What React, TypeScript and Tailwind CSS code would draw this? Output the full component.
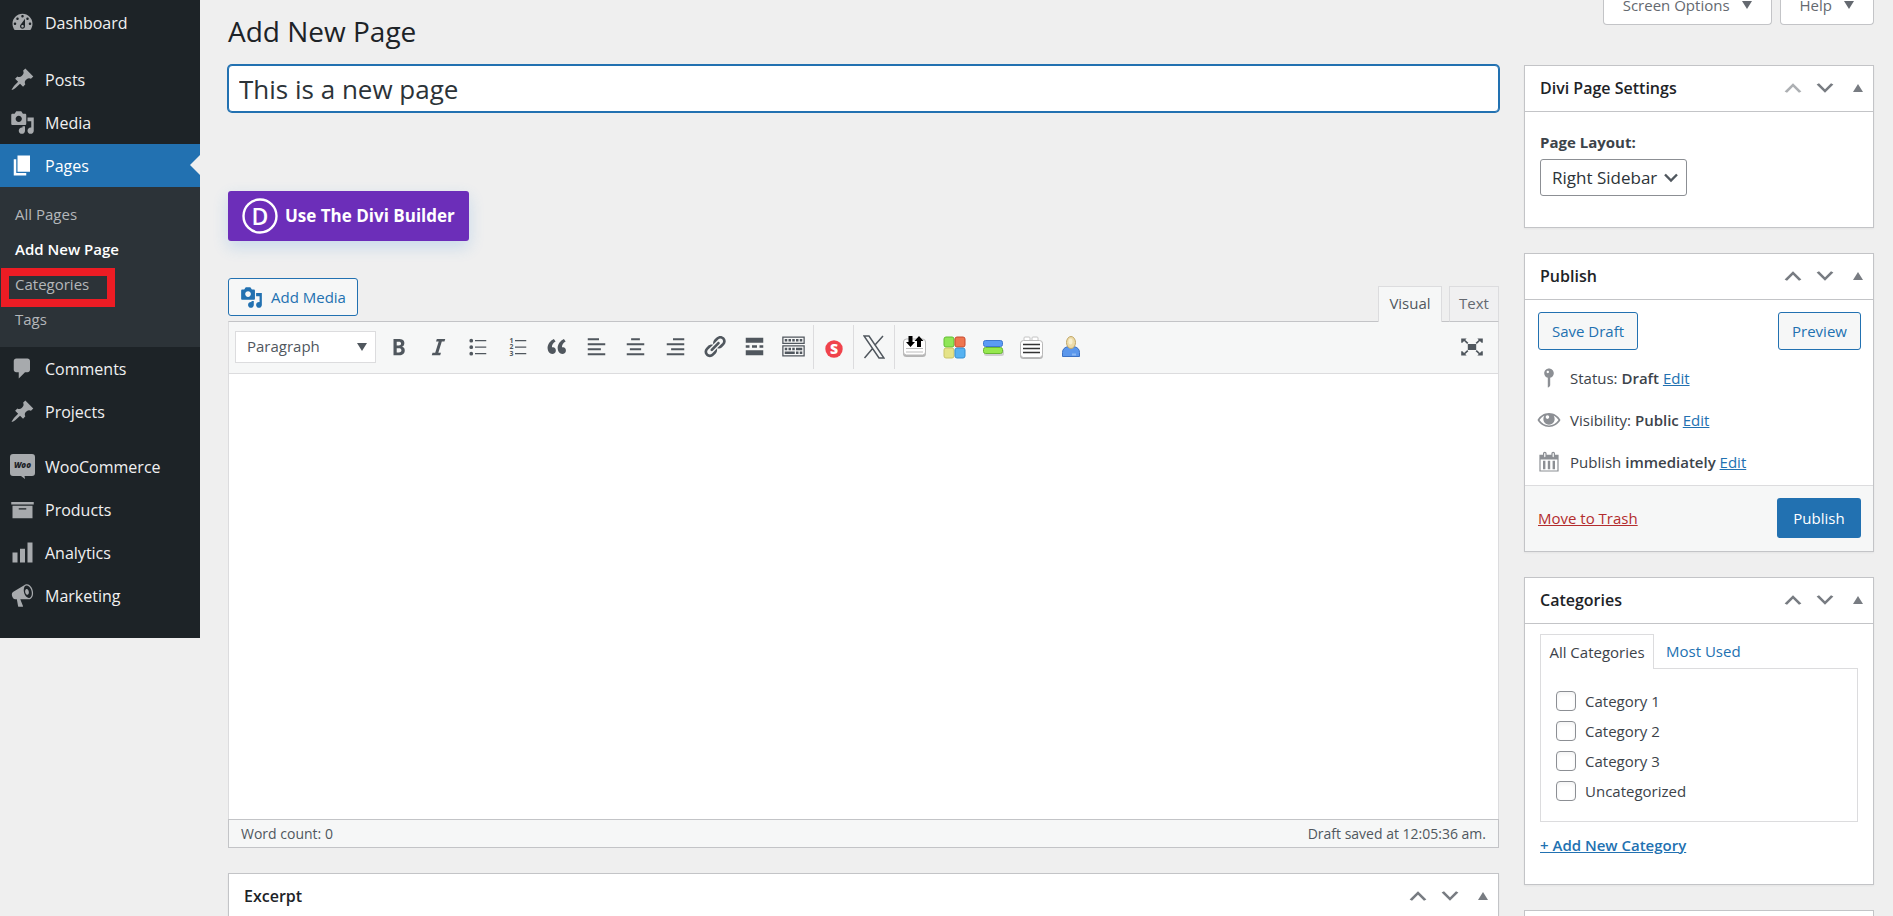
import React from "react";

const icons = {
    dashboard: "M3.76 16h12.48c1.1-1.37 1.76-3.11 1.76-5 0-4.42-3.58-8-8-8s-8 3.58-8 8c0 1.89.66 3.63 1.76 5zM10 4c.55 0 1 .45 1 1s-.45 1-1 1-1-.45-1-1 .45-1 1-1zM6 6c.55 0 1 .45 1 1s-.45 1-1 1-1-.45-1-1 .45-1 1-1zm8 0c.55 0 1 .45 1 1s-.45 1-1 1-1-.45-1-1 .45-1 1-1zm-5.37 5.55L12 7v6c0 1.1-.9 2-2 2s-2-.9-2-2c0-.57.24-1.08.63-1.45zM4 10c.55 0 1 .45 1 1s-.45 1-1 1-1-.45-1-1 .45-1 1-1zm12 0c.55 0 1 .45 1 1s-.45 1-1 1-1-.45-1-1 .45-1 1-1zm-5 3c0-.55-.45-1-1-1s-1 .45-1 1 .45 1 1 1 1-.45 1-1z",
    post: "M10.44 3.02l1.82-1.82 6.36 6.35-1.83 1.82c-1.05-.68-2.48-.57-3.41.36l-.75.75c-.92.93-1.04 2.35-.35 3.41l-1.83 1.82-2.41-2.41-2.8 2.79c-.42.42-3.38 2.71-3.8 2.29s1.86-3.39 2.28-3.81l2.79-2.79L4.1 9.36l1.83-1.82c1.05.69 2.48.57 3.4-.36l.75-.75c.93-.92 1.05-2.35.36-3.41z",
    media: "M13 11V4c0-.55-.45-1-1-1h-1.67L9 1H5L3.67 3H2c-.55 0-1 .45-1 1v7c0 .55.45 1 1 1h10c.55 0 1-.45 1-1zM7 4.5c1.38 0 2.5 1.12 2.5 2.5S8.38 9.5 7 9.5 4.5 8.38 4.5 7 5.62 4.5 7 4.5zM14 6h5v10.5c0 1.38-1.12 2.5-2.5 2.5S14 17.88 14 16.5s1.12-2.5 2.5-2.5c.17 0 .34.02.5.05V9h-3V6zm-4 8.05V13h2v3.5c0 1.38-1.12 2.5-2.5 2.5S7 17.88 7 16.5 8.12 14 9.5 14c.17 0 .34.02.5.05z",
    page: "M6 15V2h10v13H6zm-1 1h8v2H3V5h2v11z",
    comments: "M5 2h9c1.1 0 2 .9 2 2v7c0 1.1-.9 2-2 2h-2l-5 5v-5H5c-1.1 0-2-.9-2-2V4c0-1.1.9-2 2-2z",
    archive: "M19 4v2H1V4h18zM2 7h16v10H2V7zm11 3V9H7v1h6z",
    chart: "M18 18V2h-4v16h4zm-6 0V7H8v11h4zm-6 0v-8H2v8h4z",
    megaphone: "M18.15 5.94c.46 1.62.38 3.22-.02 4.48-.42 1.28-1.26 2.18-2.3 2.48-.16.06-.26.06-.4.06-.06.02-.12.02-.18.02-.06.02-.14.02-.22.02h-6.8l2.22 5.5c.02.14-.06.26-.14.34-.08.1-.24.16-.34.16H6.95c-.1 0-.26-.06-.34-.16-.08-.08-.16-.2-.14-.34l-1-5.5H4.25l-.02-.02c-.5.06-1.08-.18-1.54-.62s-.88-1.08-1.06-1.88c-.24-.8-.2-1.56-.02-2.2.18-.62.58-1.08 1.06-1.3l.02-.02 9-5.4c.1-.06.18-.1.24-.16.06-.04.14-.08.24-.12.16-.08.28-.12.5-.18 1.04-.3 2.24.1 3.22.98s1.84 2.24 2.26 3.86zm-2.58 5.98h-.02c.4-.1.74-.34 1.04-.7.58-.7.86-1.76.86-3.04 0-.64-.1-1.3-.28-1.98-.34-1.36-1.02-2.5-1.78-3.24s-1.68-1.1-2.46-.88c-.82.22-1.4.96-1.7 2-.32 1.04-.28 2.36.06 3.72.38 1.36 1 2.5 1.8 3.24.78.74 1.62 1.1 2.48.88zm-2.54-7.08c.22-.04.42-.02.62.04.38.16.76.48 1.02 1s.42 1.2.42 1.78c0 .3-.04.56-.12.8-.18.48-.44.84-.86.94-.34.1-.8-.06-1.14-.4s-.64-.86-.78-1.5c-.18-.62-.12-1.24.02-1.72s.48-.84.82-.94z",
    bold: "M6 4v13h4.54c1.37 0 2.46-.33 3.26-1 .8-.66 1.2-1.58 1.2-2.77 0-.84-.17-1.51-.51-2.01s-.9-.85-1.67-1.03v-.09c.57-.1 1.02-.4 1.36-.9s.51-1.13.51-1.91c0-1.14-.39-1.98-1.17-2.5C12.75 4.26 11.5 4 9.78 4H6zm2.57 5.15V6.26h1.36c.73 0 1.27.11 1.61.32.34.22.51.58.51 1.07 0 .54-.16.92-.47 1.15s-.82.35-1.51.35h-1.5zm0 2.19h1.6c1.44 0 2.16.53 2.16 1.61 0 .6-.17 1.05-.51 1.34s-.86.43-1.57.43H8.57v-3.38z",
    italic: "M14.78 6h-2.13l-2.8 9h2.12l-.62 2H4.6l.62-2h2.14l2.8-9H8.03l.62-2h6.75z",
    bullets: "M3.5 5.3a1.5 1.5 0 1 1 3 0 1.5 1.5 0 0 1-3 0zm0 5.2a1.5 1.5 0 1 1 3 0 1.5 1.5 0 0 1-3 0zm0 5.2a1.5 1.5 0 1 1 3 0 1.5 1.5 0 0 1-3 0zM8 4.8h9v1H8zm0 5.2h9v1H8zm0 5.2h9v1H8z",
    quote: "M9.49 13.22c0-.74-.2-1.38-.61-1.9-.62-.78-1.83-.88-2.53-.72-.29-1.65 1.11-3.75 2.92-4.65L7.88 4c-2.73 1.3-5.42 4.28-4.96 8.05C3.21 14.43 4.59 16 6.54 16c.85 0 1.56-.25 2.12-.75s.83-1.18.83-2.03zm8.05 0c0-.74-.2-1.38-.61-1.9-.63-.78-1.83-.88-2.53-.72-.29-1.65 1.11-3.75 2.92-4.65L15.93 4c-2.73 1.3-5.41 4.28-4.95 8.05.29 2.38 1.66 3.95 3.61 3.95.85 0 1.56-.25 2.12-.75s.83-1.18.83-2.03z",
    left: "M3 3.4h9V5H3zm0 4h14V9H3zm0 4h10.5V13H3zm0 4h14V17H3z",
    center: "M6.5 3.4h7V5h-7zM3 7.4h14V9H3zm2.5 4h9V13h-9zM3 15.4h14V17H3z",
    right: "M8 3.4h9V5H8zm-5 4h14V9H3zm3.500 4H17V13H6.500zM3 15.4h14V17H3z",
    link: "M17.74 2.76c1.68 1.69 1.68 4.41 0 6.1l-1.53 1.52c-1.12 1.12-2.7 1.47-4.14 1.09l2.62-2.61.76-.77.76-.76c.84-.84.84-2.2 0-3.04-.84-.85-2.2-.85-3.04 0l-.77.76-3.38 3.38c-.37-1.44-.02-3.02 1.1-4.14l1.52-1.53c1.69-1.68 4.42-1.68 6.1 0zM8.59 13.43l5.34-5.34c.42-.42.42-1.1 0-1.52-.44-.43-1.13-.39-1.53 0l-5.33 5.34c-.42.42-.42 1.1 0 1.52.44.43 1.13.39 1.52 0zm-.76 2.29l4.14-4.15c.38 1.44.03 3.02-1.09 4.14l-1.52 1.53c-1.69 1.68-4.41 1.68-6.1 0-1.68-1.68-1.68-4.42 0-6.1l1.53-1.52c1.12-1.12 2.7-1.47 4.14-1.1l-4.14 4.15c-.85.84-.85 2.2 0 3.05.84.84 2.2.84 3.04 0z",
    more: "M17 7V3H3v4h14zM6 11V9H3v2h3zm6 0V9H8v2h4zm5 0V9h-3v2h3zm0 6v-4H3v4h14z",
    sink: "M19 2v6H1V2h18zm-1 5V3H2v4h16zM5 4v2H3V4h2zm3 0v2H6V4h2zm3 0v2H9V4h2zm3 0v2h-2V4h2zm3 0v2h-2V4h2zm2 5v9H1V9h18zm-1 8v-7H2v7h16zM5 11v2H3v-2h2zm3 0v2H6v-2h2zm3 0v2H9v-2h2zm6 0v2h-5v-2h5zm-6 3v2H3v-2h8zm3 0v2h-2v-2h2zm3 0v2h-2v-2h2z",
    fullscreen: "M6.500 7.500h7v5h-7zM1 3h4.500L4.400 4.100 7 6.500l-1 1-2.600-2.400L2 6.500H1zm18 0h-4.500l1.100 1.100L13 6.500l1 1 2.600-2.400L18 6.500h1zM1 17h4.500l-1.100-1.100L7 13.500l-1-1-2.600 2.400L2 13.500H1zm18 0h-4.500l1.100-1.100-2.600-2.400 1-1 2.600 2.400 1.400-1.400h1z",
    up: "M15 14l-5-5-5 5-2-1 7-7 7 7z",
    down: "M5 6l5 5 5-5 2 1-7 7-7-7z",
    status: "M14 6c0 1.860-1.280 3.410-3 3.860V16c0 1-2 2-2 2V9.860C7.280 9.410 6 7.860 6 6c0-2.210 1.790-4 4-4s4 1.790 4 4zM8 5c0 .55.45 1 1 1s1-.45 1-1-.45-1-1-1-1 .45-1 1z",
    eye: "M10 4.200C5.900 4.200 2.300 6.500.4 10c1.900 3.500 5.500 5.800 9.600 5.800s7.700-2.300 9.600-5.800C17.700 6.500 14.100 4.200 10 4.200zm0 10.300c-3.200 0-6-1.700-7.900-4.500 1-1.500 2.400-2.700 4-3.500-.5.800-.8 1.700-.8 2.700 0 2.600 2.100 4.700 4.700 4.700s4.700-2.100 4.700-4.700c0-1-.3-1.900-.8-2.700 1.600.8 3 2 4 3.500-1.900 2.800-4.700 4.500-7.900 4.500zM8.700 6.100a1.500 1.500 0 1 1 0 3 1.500 1.500 0 0 1 0-3z",
    calendar: "M15 4h3v14H2V4h3V3c0-.83.67-1.5 1.5-1.5S8 2.17 8 3v1h4V3c0-.83.67-1.5 1.5-1.5S15 2.17 15 3v1zM6 3v2.5c0 .28.22.5.5.5s.5-.22.5-.5V3c0-.28-.22-.5-.5-.5S6 2.72 6 3zm7 0v2.5c0 .28.22.5.5.5s.5-.22.5-.5V3c0-.28-.22-.5-.5-.5s-.5.22-.5.5zm4 14V8H3v9h14zM7 16V9H5v7h2zm4 0V9H9v7h2zm4 0V9h-2v7h2z",
};

type IconName = keyof typeof icons;

function Icon({name, className = "size-6"}: { name: IconName; className?: string }) {
    return (
        <svg viewBox="0 0 20 20" fill="currentColor" fillRule="evenodd" aria-hidden="true" className={`shrink-0 ${className}`}>
            <path d={icons[name]}/>
        </svg>
    );
}

function WooIcon() {
    return (
        <svg viewBox="0 0 25 25" aria-hidden="true" className="size-[25px] shrink-0">
            <path fill="#a7aaad" d="M3 0h19a3 3 0 0 1 3 3v16a3 3 0 0 1-3 3h-7.500l.5 3-4-3H3a3 3 0 0 1-3-3V3a3 3 0 0 1 3-3z"/>
            <text x="12.500" y="14" textAnchor="middle" fontSize="8" fontStyle="italic" fontWeight="800" fill="#1d2327">Woo</text>
        </svg>
    );
}

const submenu = ["All Pages", "Add New Page", "Categories", "Tags"];

function MenuItem({icon, label, active}: { icon: IconName | "woo"; label: string; active?: boolean }) {
    return (
        <a href="#" className={`relative flex h-[43px] items-center gap-[10px] pl-[10px] text-base ${active ? "bg-[#2271b1] text-white" : "text-[#f0f0f1]"}`}>
            <span className={`flex w-[25px] justify-center ${active ? "text-white" : "text-[#a7aaad]"}`}>
                {icon === "woo" ? <WooIcon/> : <Icon name={icon} className="size-[25px]"/>}
            </span>
            {label}
            {active && (
                <span className="absolute right-0 top-[11px] border-y-[10px] border-r-[10px] border-y-transparent border-r-[#efefef]"/>
            )}
        </a>
    );
}

function Sidebar() {
    return (
        <nav className="w-[200px] shrink-0 self-start bg-[#1d2327] pb-[21px] pt-px">
            <MenuItem icon="dashboard" label="Dashboard"/>
            <div className="pt-[14px]">
                <MenuItem icon="post" label="Posts"/>
                <MenuItem icon="media" label="Media"/>
                <MenuItem icon="page" label="Pages" active/>
            </div>
            <ul className="bg-[#2c3338] py-[10px]">
                {submenu.map((item) => (
                    <li key={item} className="relative">
                        <a
                            href="#"
                            className={`flex h-[35px] items-center pl-[15px] text-[15px] ${item === "Add New Page" ? "font-semibold text-white" : "text-[#b4b7ba]"}`}
                        >
                            {item}
                        </a>
                        {item === "Categories" && (
                            <span className="pointer-events-none absolute left-px top-px h-[39px] w-[114px] border-8 border-[#ed1c24]"/>
                        )}
                    </li>
                ))}
            </ul>
            <MenuItem icon="comments" label="Comments"/>
            <MenuItem icon="post" label="Projects"/>
            <div className="pt-3">
                <MenuItem icon="woo" label="WooCommerce"/>
                <MenuItem icon="archive" label="Products"/>
                <MenuItem icon="chart" label="Analytics"/>
                <MenuItem icon="megaphone" label="Marketing"/>
            </div>
        </nav>
    );
}

function Triangle({className}: { className: string }) {
    return (
        <svg viewBox="0 0 10 8" fill="currentColor" aria-hidden="true" className={`w-[10px] shrink-0 ${className}`}>
            <path d="M5 0l5 8H0z"/>
        </svg>
    );
}

function ScreenTab({label}: { label: string }) {
    return (
        <button className="-mt-[15px] flex h-10 items-center gap-3 rounded-b border border-t-0 border-[#c3c4c7] bg-white px-[19px] pt-px text-[15px] text-[#646970]">
            {label}
            <Triangle className="rotate-180"/>
        </button>
    );
}

function Panel({title, children, first}: { title: string; children?: React.ReactNode; first?: boolean }) {
    return (
        <section className="border border-[#c3c4c7] bg-white shadow-xs">
            <div className="flex h-[46px] items-center justify-between border-b border-[#c3c4c7] pb-px pl-[15px] pr-[10px]">
                <h2 className="text-base font-semibold text-[#1d2327]">{title}</h2>
                <div className="flex items-center text-[#787c82]">
                    <button aria-label="Move up" className={`flex w-8 justify-center ${first ? "opacity-60" : ""}`}>
                        <Icon name="up"/>
                    </button>
                    <button aria-label="Move down" className="flex w-8 justify-center">
                        <Icon name="down"/>
                    </button>
                    <button aria-label="Toggle panel" className="ml-3 flex justify-center">
                        <Triangle className=""/>
                    </button>
                </div>
            </div>
            {children}
        </section>
    );
}

const formatButtons: IconName[] = ["bold", "italic", "bullets"];
const blockButtons: IconName[] = ["quote", "left", "center", "right", "link", "more", "sink"];

function ToolButton({name}: { name: IconName }) {
    return (
        <button aria-label={name} className="flex w-[35px] justify-center">
            <Icon name={name} className="size-[25px]"/>
        </button>
    );
}

function OrderedListIcon() {
    return (
        <svg viewBox="0 0 20 20" fill="currentColor" aria-hidden="true" className="size-[25px]">
            <path d="M8 4.800h9v1H8zm0 5.200h9v1H8zm0 5.200h9v1H8z"/>
            <text x="3.500" y="7" fontSize="5.500" fontWeight="700">1</text>
            <text x="3.500" y="12.200" fontSize="5.500" fontWeight="700">2</text>
            <text x="3.500" y="17.400" fontSize="5.500" fontWeight="700">3</text>
        </svg>
    );
}

function XIcon() {
    return (
        <svg viewBox="0 0 22 24" fill="none" stroke="currentColor" strokeWidth="1.500" aria-hidden="true" className="h-6 w-[22px]">
            <path d="M1 1h5l15 22h-5zM20 1l-8.500 9.500M1.500 23l8.500-10"/>
        </svg>
    );
}

function SwapIcon() {
    return (
        <svg viewBox="0 0 25 24" aria-hidden="true" className="w-[25px]">
            <rect x="1" y="5" width="23" height="17" rx="3.500" fill="#b5b5b5"/>
            <rect x="1.500" y="4" width="22" height="16" rx="3" fill="#fff" stroke="#b9b9b9"/>
            <path d="M4 13.500h17M4 17h17" stroke="#bdbdbd"/>
            <path d="M6.500 1h4v6H13l-4.500 5L4 7h2.500zM15 12h4V6h2.500L17 1l-4.500 5H15z" fill="#000"/>
        </svg>
    );
}

function BlocksIcon() {
    return (
        <svg viewBox="0 0 24 24" aria-hidden="true" className="w-6">
            <rect x="2" y="2" width="10" height="10" rx="2" fill="#8fe657" stroke="#63bd33"/>
            <rect x="13" y="2" width="10" height="10" rx="2" fill="#ee7650" stroke="#c94b2e"/>
            <rect x="2" y="13" width="10" height="10" rx="2" fill="#e5e388" stroke="#c9c569"/>
            <rect x="13" y="13" width="10" height="10" rx="2" fill="#56b2f1" stroke="#3590d2"/>
        </svg>
    );
}

function BarsIcon() {
    return (
        <svg viewBox="0 0 24 24" aria-hidden="true" className="w-6">
            <rect x="3" y="14" width="20" height="7" rx="2.500" fill="#aaa" opacity=".5"/>
            <rect x="2.500" y="5.500" width="19" height="6" rx="2" fill="#5a9bf5" stroke="#3f78cf"/>
            <rect x="2.500" y="12.500" width="19" height="6" rx="2" fill="#96e84e" stroke="#69b733"/>
        </svg>
    );
}

function NoteIcon() {
    return (
        <svg viewBox="0 0 25 24" aria-hidden="true" className="w-[25px]">
            <rect x="1" y="6" width="23" height="18" rx="3.500" fill="#b5b5b5"/>
            <path d="M5 5V3q0-1 1-1h4q1 0 1 1v2m2 0V3q0-1 1-1h4q1 0 1 1v2" fill="#fff" stroke="#c4c4c4"/>
            <rect x="1.500" y="5.500" width="22" height="17" rx="3" fill="#fff" stroke="#b9b9b9"/>
            <path d="M4 9.500h17M4 13.500h17M4 17.500h17" stroke="#333" strokeWidth="1.300"/>
        </svg>
    );
}

function PersonIcon() {
    return (
        <svg viewBox="0 0 24 24" aria-hidden="true" className="w-6">
            <path d="M3.500 21.500v-4q0-5 6-6h5q6 1 6 6v4z" fill="#5b97ec" stroke="#3b71c4"/>
            <path d="M13 18.500h4v2h-4z" fill="#8bb8f5"/>
            <ellipse cx="12" cy="7.500" rx="4.500" ry="6" fill="#ecdba9" stroke="#c2a868"/>
            <ellipse cx="11.500" cy="6.500" rx="2" ry="3" fill="#f8efcf"/>
        </svg>
    );
}

function Toolbar() {
    return (
        <div className="flex h-[52px] items-center border-b border-[#dcdcde] bg-[#f6f7f7] pb-[2px] pl-[6px] pr-[10px] text-[#50575e]">
            <button className="flex h-8 w-[141px] items-center justify-between border border-[#dcdcde] bg-white pl-[11px] pr-2 text-[15px]">
                Paragraph
                <Triangle className="rotate-180"/>
            </button>
            <div className="ml-[5px] flex w-[430px] justify-between">
                {formatButtons.map((name) => <ToolButton key={name} name={name}/>)}
                <button aria-label="Numbered list" className="flex w-[35px] justify-center"><OrderedListIcon/></button>
                {blockButtons.map((name) => <ToolButton key={name} name={name}/>)}
            </div>
            <div className="ml-[2px] flex h-11 items-center">
                <button aria-label="Shortcodes" className="flex h-full w-10 items-center justify-center border-l border-[#dcdcde] pt-1">
                    <svg viewBox="0 0 18 18" className="size-[18px]">
                        <circle cx="9" cy="9" r="8.700" fill="#f0434c"/>
                        <text x="9" y="14" textAnchor="middle" fontSize="14" fontWeight="800" fill="#fff">S</text>
                    </svg>
                </button>
                <button aria-label="X" className="flex h-full w-[42px] items-center justify-center border-x border-[#dcdcde]"><XIcon/></button>
            </div>
            <div className="flex items-center">
                <button aria-label="Swap" className="flex w-[39px] justify-center"><SwapIcon/></button>
                <button aria-label="Blocks" className="flex w-[39px] justify-center"><BlocksIcon/></button>
                <button aria-label="Buttons" className="flex w-[39px] justify-center"><BarsIcon/></button>
                <button aria-label="Notes" className="flex w-[39px] justify-center"><NoteIcon/></button>
                <button aria-label="Author" className="flex w-[39px] justify-center"><PersonIcon/></button>
            </div>
            <button aria-label="Fullscreen" className="ml-auto flex w-8 justify-center"><Icon name="fullscreen"/></button>
        </div>
    );
}

function Editor() {
    return (
        <div>
            <div className="flex items-end justify-between">
                <button className="mb-[5px] flex h-[38px] items-center gap-2 rounded-[3px] border border-[#2271b1] bg-[#f6f7f7] px-[11px] text-[15px] text-[#2271b1]">
                    <Icon name="media" className="size-[23px]"/>
                    Add Media
                </button>
                <div className="-mb-px flex gap-[7px] text-[15px]">
                    <button className="h-[36px] w-16 border border-b-0 border-[#dcdcde] bg-[#f6f7f7] pb-[2px] text-[#50575e]">Visual</button>
                    <button className="h-[36px] w-[50px] border border-b-[#c3c4c7] border-[#dcdcde] bg-[#f0f0f1] pb-px text-[#646970]">Text</button>
                </div>
            </div>
            <div className="border border-[#dcdcde] border-t-[#c3c4c7] bg-white">
                <Toolbar/>
                <textarea aria-label="Page content" className="block h-[445px] w-full resize-none p-3 outline-none"/>
            </div>
            <div className="-mt-px flex h-[29px] items-center justify-between border border-[#c3c4c7] bg-[#f6f7f7] px-3 text-sm text-[#50575e]">
                <span>Word count: 0</span>
                <span>Draft saved at 12:05:36 am.</span>
            </div>
        </div>
    );
}

const publishRows: { icon: IconName; label: string; value: string }[] = [
    {icon: "status", label: "Status:", value: "Draft"},
    {icon: "eye", label: "Visibility:", value: "Public"},
    {icon: "calendar", label: "Publish", value: "immediately"},
];

const categories = ["Category 1", "Category 2", "Category 3", "Uncategorized"];

function SidePanels() {
    return (
        <aside className="flex w-[350px] shrink-0 flex-col gap-[25px] text-[15px] text-[#3c434a]">
            <Panel title="Divi Page Settings" first>
                <div className="px-[15px] pb-[31px] pt-[19px]">
                    <label htmlFor="layout" className="block leading-[22px] font-bold">Page Layout:</label>
                    <div className="relative mt-[6px] w-[147px]">
                        <select id="layout" className="h-[37px] w-full appearance-none rounded-[3px] border border-[#8c8f94] bg-white pl-[11px] text-[17px] text-[#2c3338]">
                            <option>Right Sidebar</option>
                        </select>
                        <svg viewBox="0 0 14 10" fill="none" stroke="#50575e" strokeWidth="2.400" className="pointer-events-none absolute right-[9px] top-[14px] w-[14px]">
                            <path d="M1 1.500l6 6 6-6"/>
                        </svg>
                    </div>
                </div>
            </Panel>
            <Panel title="Publish">
                <div className="flex justify-between pl-[13px] pr-3 pt-3">
                    <button className="h-[38px] w-[100px] rounded-[3px] border border-[#2271b1] bg-[#f6f7f7] text-[#2271b1]">Save Draft</button>
                    <button className="h-[38px] w-[83px] rounded-[3px] border border-[#2271b1] bg-[#f6f7f7] text-[#2271b1]">Preview</button>
                </div>
                <div className="pb-[2px] pl-3 pt-[7px]">
                    {publishRows.map((row) => (
                        <div key={row.label} className="flex h-[42px] items-center">
                            <Icon name={row.icon} className="mr-[9px] size-6 text-[#8c8f94]"/>
                            <span>
                                {row.label} <span className="font-semibold">{row.value}</span>{" "}
                                <a href="#" className="text-[#2271b1] underline">Edit</a>
                            </span>
                        </div>
                    ))}
                </div>
                <div className="flex items-center justify-between border-t border-[#dcdcde] bg-[#f6f7f7] pb-[13px] pl-[13px] pr-3 pt-3">
                    <a href="#" className="text-[#b32d2e] underline">Move to Trash</a>
                    <button className="h-10 w-[84px] rounded-[3px] bg-[#2271b1] text-white">Publish</button>
                </div>
            </Panel>
            <Panel title="Categories">
                <div className="px-[15px] pb-[27px] pt-[10px]">
                    <div className="flex">
                        <button className="-mb-px h-[35px] w-[114px] border border-b-0 border-[#dcdcde] bg-white text-[#3c434a]">All Categories</button>
                        <button className="ml-3 text-[#2271b1]">Most Used</button>
                    </div>
                    <div className="border border-[#dcdcde] px-[15px] pb-[15px] pt-[17px]">
                        {categories.map((item) => (
                            <label key={item} className="flex h-[30px] items-center gap-[9px]">
                                <input type="checkbox" className="size-5 appearance-none rounded-[4px] border border-[#8c8f94] bg-white shadow-inner"/>
                                {item}
                            </label>
                        ))}
                    </div>
                    <a href="#" className="mt-3 block font-semibold text-[#2271b1] underline">+ Add New Category</a>
                </div>
            </Panel>
            <section className="h-[46px] border border-[#c3c4c7] bg-white"/>
        </aside>
    );
}

export default function App() {
    return (
        <div className="flex h-screen overflow-hidden bg-[#efefef] font-['Open_Sans','Noto_Sans',sans-serif] text-[#3c434a]">
            <Sidebar/>
            <main className="min-w-0 flex-1 pl-7 pr-[19px]">
                <header className="flex h-[65px] items-start justify-between">
                    <h1 className="pt-[13px] text-[28px] leading-9 text-[#1d2327]">Add New Page</h1>
                    <div className="flex gap-2">
                        <ScreenTab label="Screen Options"/>
                        <ScreenTab label="Help"/>
                    </div>
                </header>
                <div className="flex gap-[25px]">
                    <div className="min-w-0 flex-1">
                        <input
                            aria-label="Title"
                            defaultValue="This is a new page"
                            className="block h-[47px] w-full rounded border border-[#2271b1] bg-white px-[10px] text-[26px] text-[#2c3338] outline-none ring-1 ring-[#2271b1]"
                        />
                        <button className="mt-[79px] flex h-[50px] items-center gap-[7px] rounded-[3px] bg-[#6c2eb9] px-[14px] text-[17px] font-bold text-white shadow-[0_6px_16px_rgba(43,135,218,0.2)]">
                            <svg viewBox="0 0 36 36" className="size-9">
                                <circle cx="18" cy="18" r="16.500" fill="none" stroke="#fff" strokeWidth="2.400"/>
                                <text x="18" y="26.500" textAnchor="middle" fontSize="23" fontWeight="600" fill="#fff">D</text>
                            </svg>
                            Use The Divi Builder
                        </button>
                        <div className="mt-[37px]">
                            <Editor/>
                        </div>
                        <div className="mt-[25px]">
                            <Panel title="Excerpt"/>
                        </div>
                    </div>
                    <SidePanels/>
                </div>
            </main>
        </div>
    );
}
